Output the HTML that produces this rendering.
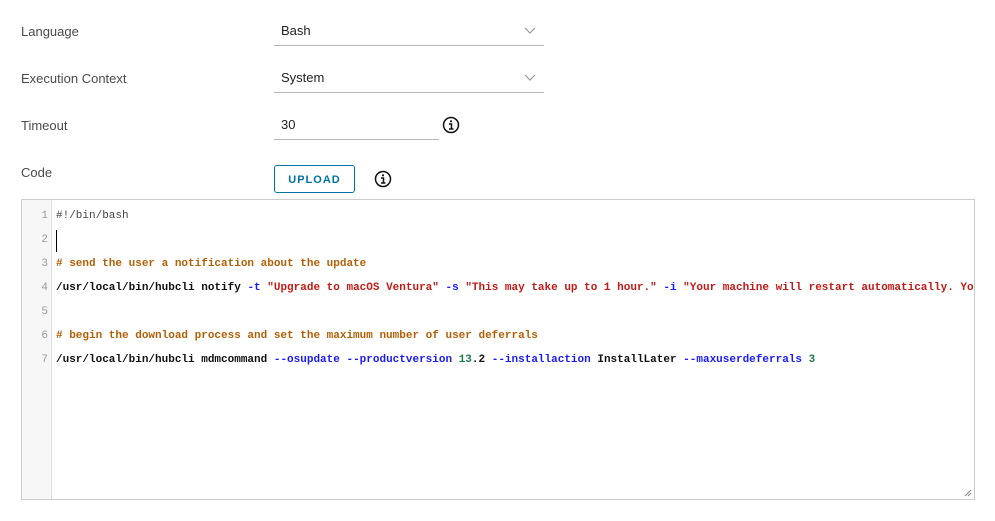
<!DOCTYPE html>
<html><head><meta charset="utf-8"><style>
body{margin:0;width:995px;height:521px;background:#fff;font-family:"Liberation Sans",sans-serif;position:relative;overflow:hidden;color:#333}
.l{position:absolute;left:21px;font-size:13px;color:#4a4a4a}
.sel{position:absolute;left:274px;width:270px;height:30px;border-bottom:1px solid #b8b8b8;font-size:13px;color:#222}
.sel span{position:absolute;left:7px;top:8px}
.chev{position:absolute;right:8px;top:12px}
.info{position:absolute;width:18px;height:18px}
.btn{position:absolute;left:274px;top:165px;width:81px;height:28px;border:1px solid #0072a3;border-radius:3px;box-sizing:border-box;color:#0072a3;font-size:11px;letter-spacing:1px;font-weight:bold;text-align:center;line-height:28px}
.ed{position:absolute;left:21px;top:199px;width:954px;height:301px;border:1px solid #ccc;box-sizing:border-box;overflow:hidden}
.gut{position:absolute;left:0;top:0;width:29px;height:100%;background:#f7f7f7;border-right:1px solid #ddd}
.ln{position:absolute;left:0;width:26px;text-align:right;font:11px "Liberation Mono",monospace;color:#999}
.cd{position:absolute;left:34px;white-space:pre;font:bold 11px "Liberation Mono",monospace;color:#111}
.c{color:#b45f06}.s{color:#c41a16}.f{color:#1a1aff}.n{color:#1c7a4d}
</style></head><body>
<div class="l" style="top:24px">Language</div>
<div class="l" style="top:71px">Execution Context</div>
<div class="l" style="top:118px">Timeout</div>
<div class="l" style="top:165px">Code</div>
<div class="sel" style="top:15px"><span>Bash</span><svg class="chev" width="12" height="8"><path d="M1 1l5 5 5-5" fill="none" stroke="#999" stroke-width="1.2"/></svg></div>
<div class="sel" style="top:62px"><span>System</span><svg class="chev" width="12" height="8"><path d="M1 1l5 5 5-5" fill="none" stroke="#999" stroke-width="1.2"/></svg></div>
<div class="sel" style="top:109px;width:165px"><span>30</span></div>
<svg class="info" style="left:442px;top:116px" viewBox="0 0 18 18"><circle cx="9" cy="9" r="7.5" fill="none" stroke="#111" stroke-width="1.5"/><circle cx="9" cy="5.3" r="1.1" fill="#111"/><path d="M7 8h2.5v5M7 13h4.5" fill="none" stroke="#111" stroke-width="1.5"/></svg>
<div class="btn">UPLOAD</div>
<svg class="info" style="left:374px;top:170px" viewBox="0 0 18 18"><circle cx="9" cy="9" r="7.5" fill="none" stroke="#111" stroke-width="1.5"/><circle cx="9" cy="5.3" r="1.1" fill="#111"/><path d="M7 8h2.5v5M7 13h4.5" fill="none" stroke="#111" stroke-width="1.5"/></svg>
<div class="ed"><div class="gut"></div>
<div class="ln" style="top:10px">1</div><div class="ln" style="top:34px">2</div><div class="ln" style="top:58px">3</div><div class="ln" style="top:82px">4</div><div class="ln" style="top:106px">5</div><div class="ln" style="top:130px">6</div><div class="ln" style="top:154px">7</div>
<div class="cd" style="top:10px;color:#444;font-weight:normal">#!/bin/bash</div>
<div style="position:absolute;left:34px;top:30px;width:1px;height:22px;background:#000"></div>
<div class="cd c" style="top:58px"># send the user a notification about the update</div>
<div class="cd" style="top:82px">/usr/local/bin/hubcli notify <span class="f">-t</span> <span class="s">"Upgrade to macOS Ventura"</span> <span class="f">-s</span> <span class="s">"This may take up to 1 hour."</span> <span class="f">-i</span> <span class="s">"Your machine will restart automatically. You can defer"</span></div>
<div class="cd c" style="top:130px"># begin the download process and set the maximum number of user deferrals</div>
<div class="cd" style="top:154px">/usr/local/bin/hubcli mdmcommand <span class="f">--osupdate</span> <span class="f">--productversion</span> <span class="n">13</span>.2 <span class="f">--installaction</span> InstallLater <span class="f">--maxuserdeferrals</span> <span class="n">3</span></div>
<svg style="position:absolute;right:2px;bottom:2px" width="8" height="8"><path d="M7 1L1 7M7 4L4 7" stroke="#888" stroke-width="1"/></svg>
</div>
</body></html>
